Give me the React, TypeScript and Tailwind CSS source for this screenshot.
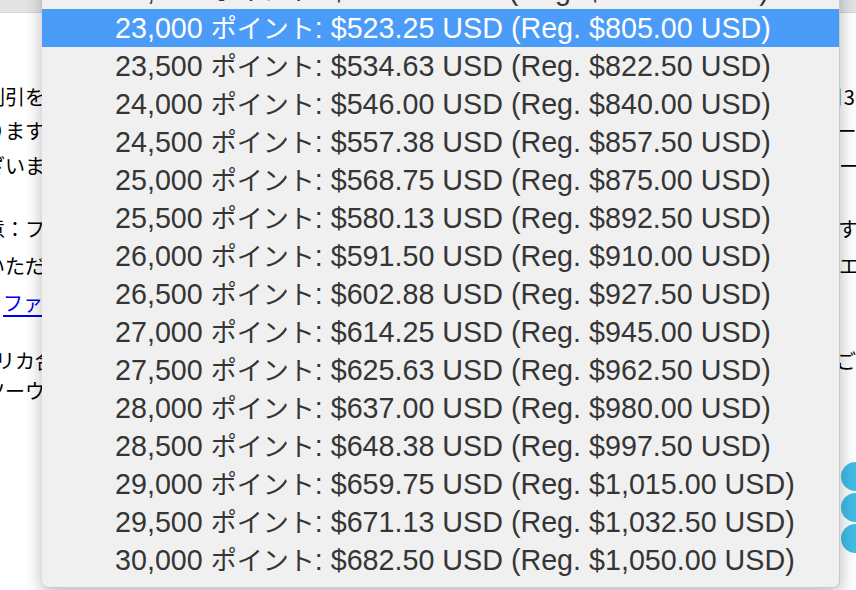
const fmt = (n: number) =>
  n.toLocaleString('en-US', { minimumFractionDigits: 2, maximumFractionDigits: 2 });

const options = Array.from({ length: 16 }, (_, i) => {
  const pts = 22500 + i * 500;
  const price = Math.round((pts * 2275) / 1000) / 100;
  const reg = (pts * 35) / 1000;
  return {
    pts,
    points: pts.toLocaleString('en-US'),
    rest: `: $${fmt(price)} USD (Reg. $${fmt(reg)} USD)`,
  };
});

const lines = [
  { top: 'mt-[67px]', left: '割引を', leftShift: '-ml-[15px]', right: '月30', rightShift: '-mr-[10px]' },
  { top: 'mt-0', left: 'ります', leftShift: '-ml-[15px]', right: 'ーム', rightShift: '-mr-[20px]' },
  { top: 'mt-[1px]', left: 'ございま', leftShift: '-ml-[35px]', right: 'ービ', rightShift: '-mr-[23px]' },
  { top: 'mt-[29px]', left: '注意：フ', leftShift: '-ml-[35px]', right: 'す。', rightShift: '-mr-[20px]' },
  { top: 'mt-[3px]', left: 'いただ', leftShift: '-ml-[15px]', right: 'エア', rightShift: '-mr-[23px]' },
  { top: 'mt-[3px]', left: '', leftShift: '', right: '', rightShift: '' },
  { top: 'mt-[24px]', left: 'アメリカ合衆国', leftShift: '-ml-[44px]', right: 'ご利', rightShift: '-mr-[20px]' },
  { top: '-mt-[4px]', left: 'ツーウェイ', leftShift: '-ml-[15px]', right: '', rightShift: '' },
];

const App = () => {
  return (
    <div
      className="relative w-[856px] h-[590px] overflow-hidden bg-white text-black"
      style={{ fontFamily: '"Liberation Sans", "Noto Sans CJK JP", sans-serif' }}
    >
      <div className="h-[13px] bg-[#e4e4e4] border-b border-[#d6d6d6]"></div>

      <div className="flex flex-col text-[20px]" style={{ fontFamily: '"Noto Sans CJK JP", sans-serif' }}>
        {lines.map((l, i) => (
          <div key={i} className={`flex justify-between h-[34px] leading-[34px] whitespace-nowrap ${l.top}`}>
            {i === 5 ? (
              <a href="#" className="ml-[3px] text-[#0000ee] underline underline-offset-[4px]">
                ファイル
              </a>
            ) : (
              <span className={l.leftShift}>{l.left}</span>
            )}
            <span className={l.rightShift}>{l.right}</span>
          </div>
        ))}
      </div>

      {/* floating chat bubbles at the right edge */}
      <div className="absolute right-[-14px] top-[462px] flex flex-col gap-[2px]">
        <div className="w-[29px] h-[29px] rounded-full bg-[#3fbde7]"></div>
        <div className="w-[29px] h-[29px] rounded-full bg-[#3fbde7]"></div>
        <div className="w-[29px] h-[29px] rounded-full bg-[#3fbde7]"></div>
      </div>

      {/* open select menu */}
      <div className="absolute left-[42px] top-[-29px] w-[798px] pb-[8px] bg-[#f0f0f0] rounded-b-[7px] border-r border-b border-[#c9c9c9] shadow-[0_6px_18px_rgba(0,0,0,0.28)]">
        {options.map((o) => (
          <div
            key={o.pts}
            className={`h-[38px] leading-[38px] pl-[73px] text-[28.7px] whitespace-nowrap ${
              o.pts === 23000 ? 'bg-[#4b9bf9] text-white' : 'text-[#353535]'
            }`}
          >
            {o.points} <span className="text-[26px]">ポイント</span>
            {o.rest}
          </div>
        ))}
      </div>
    </div>
  );
};

export default App;
